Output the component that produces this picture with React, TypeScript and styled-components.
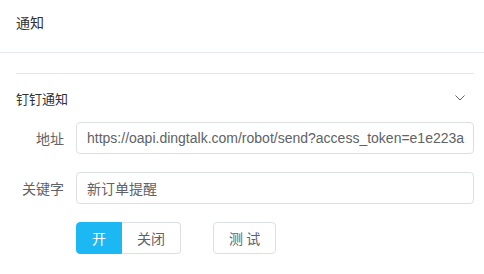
import React from "react";
import styled, { createGlobalStyle } from "styled-components";

const Global = createGlobalStyle`
  html, body { margin: 0; padding: 0; background: #fff; }
  body { font-family: "Liberation Sans", "Noto Sans CJK SC", sans-serif; font-size: 14px; color: #606266; }
  * { box-sizing: border-box; }
`;

const Page = styled.div`
  width: 484px;
  height: 274px;
  overflow: hidden;
`;

const Header = styled.div`
  height: 53px;
  padding: 14px 16px 0;
  line-height: 16px;
  font-size: 14px;
  color: #303133;
  border-bottom: 1px solid #e4e7ed;
  font-family: "Noto Sans CJK SC", sans-serif;
`;

const Body = styled.div`
  padding: 20px 10px 0 16px;
`;

const Collapse = styled.div`
  border-top: 1px solid #e4e7ed;
`;

const CollapseHeader = styled.div`
  height: 48px;
  display: flex;
  align-items: center;
  justify-content: space-between;
  color: #303133;
  font-size: 13px;
  font-family: "Noto Sans CJK SC", sans-serif;
  padding-right: 9px;
`;

const Form = styled.div`
  display: flex;
  flex-direction: column;
  gap: 18px;
`;

const Row = styled.div`
  display: flex;
  align-items: center;
  height: 32px;
`;

const Label = styled.label`
  width: 60px;
  padding-right: 12px;
  text-align: right;
  color: #606266;
  font-family: "Noto Sans CJK SC", sans-serif;
  font-size: 14px;
`;

const Input = styled.div`
  flex: 1;
  height: 32px;
  border: 1px solid #dcdfe6;
  border-radius: 4px;
  padding: 0 10px;
  display: flex;
  align-items: center;
  white-space: nowrap;
  overflow: hidden;
  color: #606266;
  font-family: "Liberation Sans", "Noto Sans CJK SC", sans-serif;
  font-size: 14px;
`;

const Group = styled.div`
  display: flex;
  margin-left: 60px;
`;

const Seg = styled.button<{ $active?: boolean; $pos: "left" | "right" }>`
  height: 32px;
  padding: 0 15px;
  font-family: "Noto Sans CJK SC", sans-serif;
  font-size: 14px;
  border: 1px solid ${(p) => (p.$active ? "#1bb8f3" : "#dcdfe6")};
  ${(p) => (p.$pos === "right" ? "border-left: none;" : "")}
  background: ${(p) => (p.$active ? "#1bb8f3" : "#fff")};
  color: ${(p) => (p.$active ? "#fff" : "#606266")};
  border-radius: ${(p) => (p.$pos === "left" ? "4px 0 0 4px" : "0 4px 4px 0")};
  line-height: 1;
`;

const Button = styled.button`
  height: 32px;
  margin-left: 32px;
  padding: 0 15px;
  border: 1px solid #dcdfe6;
  border-radius: 4px;
  background: #fff;
  color: #606266;
  font-family: "Noto Sans CJK SC", sans-serif;
  font-size: 14px;
  white-space: pre;
`;

export default function App() {
  return (
    <Page>
      <Global />
      <Header>通知</Header>
      <Body>
        <Collapse>
          <CollapseHeader>
            <span>钉钉通知</span>
            <svg width="10" height="6" viewBox="0 0 10 6">
              <path d="M0.5 0.5 L5 5 L9.5 0.5" fill="none" stroke="#606266" strokeWidth="1" />
            </svg>
          </CollapseHeader>
          <Form>
            <Row>
              <Label>地址</Label>
              <Input>https://oapi.dingtalk.com/robot/send?access_token=e1e223a</Input>
            </Row>
            <Row>
              <Label>关键字</Label>
              <Input>新订单提醒</Input>
            </Row>
            <Row>
              <Group>
                <Seg $active $pos="left">开</Seg>
                <Seg $pos="right">关闭</Seg>
              </Group>
              <Button>测 试</Button>
            </Row>
          </Form>
        </Collapse>
      </Body>
    </Page>
  );
}
